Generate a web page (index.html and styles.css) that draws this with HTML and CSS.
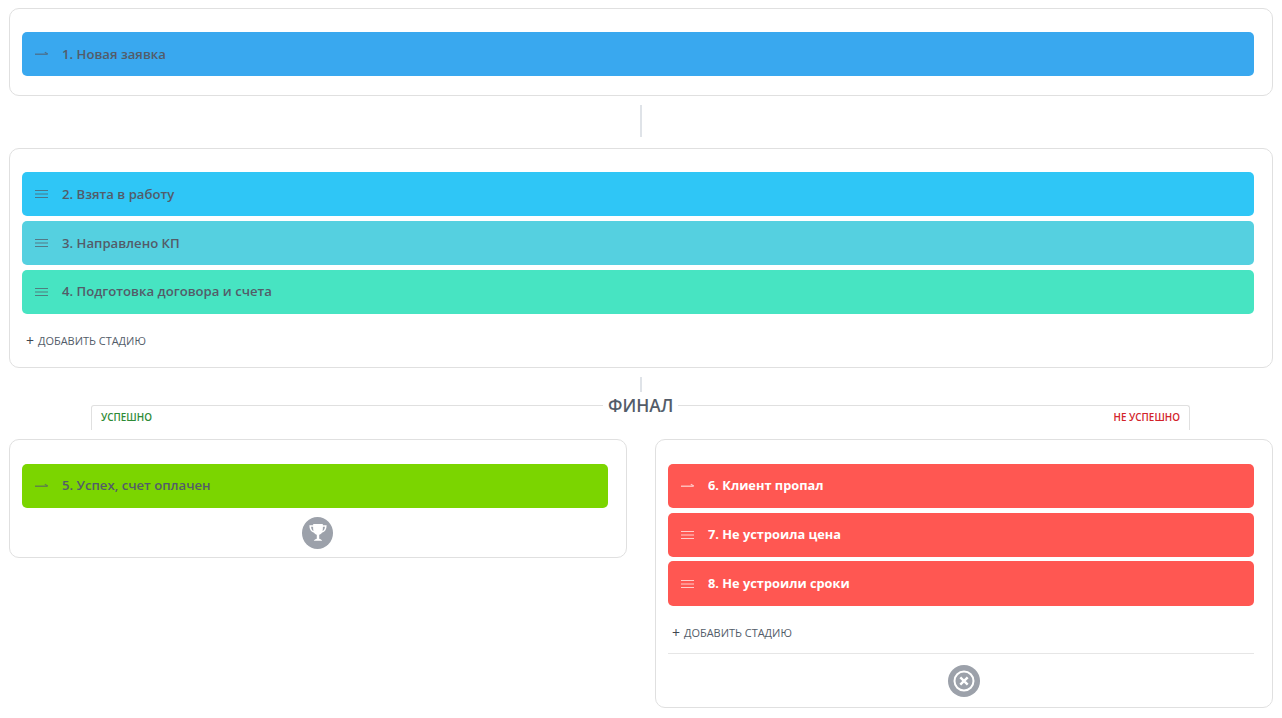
FILE: index.html
```html
<!DOCTYPE html>
<html lang="ru">
<head>
<meta charset="utf-8">
<title>Стадии</title>
<link rel="stylesheet" href="styles.css">
</head>
<body>
<svg class="defs" width="0" height="0" aria-hidden="true">
  <symbol id="i-arrow" viewBox="0 0 13 10"><path d="M0 5.200h12.500" fill="none" stroke="currentColor" stroke-width="1.300"/><path d="M9.800 3.300 13 5" fill="none" stroke="currentColor" stroke-width="1.100"/></symbol>
  <symbol id="i-lines" viewBox="0 0 13 10"><path d="M0 1.500h13M0 5h13M0 8.500h13" fill="none" stroke="currentColor" stroke-width="1"/></symbol>
</svg>
<main class="page">
  <section class="panel panel-first">
    <div class="stage blue"><svg class="ico"><use href="#i-arrow"/></svg><span>1. Новая заявка</span></div>
  </section>
  <div class="link link-a"></div>
  <section class="panel panel-mid">
    <div class="stage sky"><svg class="ico"><use href="#i-lines"/></svg><span>2. Взята в работу</span></div>
    <div class="stage teal"><svg class="ico"><use href="#i-lines"/></svg><span>3. Направлено КП</span></div>
    <div class="stage mint"><svg class="ico"><use href="#i-lines"/></svg><span>4. Подготовка договора и счета</span></div>
    <div class="add"><span class="plus">+</span>ДОБАВИТЬ СТАДИЮ</div>
  </section>
  <div class="link link-b"></div>
  <div class="final">
    <span class="ok">УСПЕШНО</span>
    <span class="fail">НЕ УСПЕШНО</span>
    <h2 class="final-title">ФИНАЛ</h2>
  </div>
  <div class="columns">
    <section class="panel panel-ok">
      <div class="stage green"><svg class="ico"><use href="#i-arrow"/></svg><span>5. Успех, счет оплачен</span></div>
      <div class="badge-row badge-row-ok">
        <div class="badge">
          <svg viewBox="0 0 20 20" width="24" height="24"><path d="M6 2.500h8v1h3.200c0 3.400-1.300 5.600-3.900 6.300-.6.900-1.400 1.500-2.300 1.700v3.300c1 .2 2 .7 2.500 1.700H6.500c.5-1 1.500-1.500 2.500-1.700v-3.300c-.9-.2-1.700-.8-2.300-1.700C4.100 9.100 2.800 6.900 2.800 3.500H6zM4.200 4.800c.2 1.800.9 3 2 3.600-.2-1-.3-2.300-.3-3.600zm11.600 0h-1.700c0 1.300-.1 2.600-.3 3.600 1.100-.6 1.800-1.800 2-3.600z" fill="#fff" fill-rule="evenodd"/></svg>
        </div>
      </div>
    </section>
    <section class="panel panel-fail">
      <div class="stage red"><svg class="ico"><use href="#i-arrow"/></svg><span>6. Клиент пропал</span></div>
      <div class="stage red"><svg class="ico"><use href="#i-lines"/></svg><span>7. Не устроила цена</span></div>
      <div class="stage red"><svg class="ico"><use href="#i-lines"/></svg><span>8. Не устроили сроки</span></div>
      <div class="add"><span class="plus">+</span>ДОБАВИТЬ СТАДИЮ</div>
      <div class="divider"></div>
      <div class="badge-row badge-row-fail">
        <div class="badge">
          <svg viewBox="0 0 22 22" width="22" height="22"><circle cx="11" cy="11" r="9.500" fill="none" stroke="#fff" stroke-width="2"/><path d="M7.300 7.300l7.400 7.400M14.700 7.300l-7.400 7.400" fill="none" stroke="#fff" stroke-width="2.400"/></svg>
        </div>
      </div>
    </section>
  </div>
</main>
</body>
</html>
```

FILE: styles.css
```css
* { box-sizing: border-box; }
html, body { margin: 0; padding: 0; background: #fff; }
body { font-family: "Open Sans", sans-serif; color: #535c69; overflow: hidden; }
.defs { position: absolute; }
.page { width: 1282px; height: 718px; padding: 8px 9px 0; }

.panel { background: #fff; border: 1px solid #e0e0e0; border-radius: 10px; padding: 23px 12px 0; }
.panel-first { height: 88px; }
.panel-mid { height: 220px; }
.panel-ok { width: 618px; height: 119px; padding-top: 24px; }
.panel-fail { width: 618px; height: 269px; padding-top: 24px; }

.link { width: 2px; background: #dfe3e8; margin-left: 631px; }
.link-a { height: 32px; margin-top: 9px; margin-bottom: 11px; }
.link-b { height: 15px; margin-top: 9px; margin-bottom: 13px; }

.stage { display: flex; align-items: center; height: 44px; border-radius: 5px; padding-left: 13px; margin-right: 6px; margin-bottom: 4.850px; font-size: 13.150px; font-weight: 600; }
.stage span { margin-left: 14px; margin-bottom: .6px; line-height: 20px; }
.ico { width: 13px; height: 10px; flex: none; color: #535c69; opacity: .75; }
.blue { background: #39a8ef; }
.sky { background: #2fc6f6; }
.teal { background: #55d0e0; }
.mint { background: #47e4c2; }
.green { background: #7bd500; }
.red { background: #ff5752; color: #fff; }
.red .ico { color: #fff; opacity: .7; }
.panel-ok .stage span, .panel-fail .stage span { margin-bottom: 1.500px; }
.panel-fail .stage { height: 44.300px; margin-bottom: 4.400px; }
.panel-fail .stage span { font-weight: 700; font-size: 12.800px; }

.add { display: flex; align-items: center; height: 16px; margin-top: 19px; padding-left: 4px; font-size: 10.950px; color: #535c69; white-space: nowrap; }
.plus { font-size: 14px; margin-right: 4px; color: #404650; }
.panel-fail .add { margin-top: 18.800px; }
.divider { height: 1px; margin: 13px 6px 0 0; background: #e6e6e6; }

.final { position: relative; display: flex; justify-content: space-between; align-items: flex-start; height: 25px; margin: 0 83px 0 82px; padding: 5px 9px 0; border: 1px solid #e0e0e0; border-bottom: 0; border-radius: 3px 3px 0 0; font-size: 9.900px; font-weight: 600; line-height: 12px; }
.ok { color: #2e8b36; }
.fail { color: #d2232a; }
.final-title { position: absolute; left: 511px; top: -12px; margin: 0; padding: 0 5px; background: #fff; font-size: 17.400px; font-weight: 600; line-height: 22px; color: #535c69; }

.columns { display: flex; justify-content: space-between; margin-top: 9px; align-items: flex-start; }

.badge-row { display: flex; justify-content: center; }
.badge-row-ok { margin-top: 9.150px; padding-right: 1px; }
.badge-row-fail { margin-top: 11px; }
.badge { display: flex; align-items: center; justify-content: center; width: 31px; height: 32px; border-radius: 50%; background: #9ca1aa; }
.badge-row-fail .badge { width: 32px; height: 32px; }
```
